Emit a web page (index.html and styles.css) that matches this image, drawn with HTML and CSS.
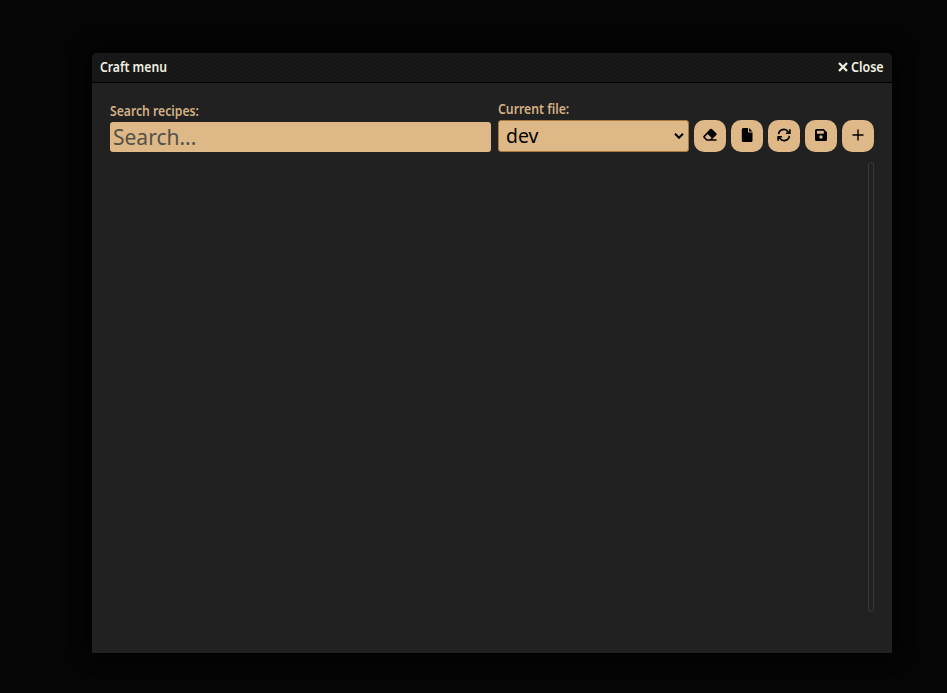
FILE: index.html
```html
<!DOCTYPE html>
<html lang="en">
<head>
<meta charset="utf-8">
<title>Craft menu</title>
<link rel="stylesheet" href="styles.css">
</head>
<body>
<section class="window">
  <header class="titlebar">
    <h1 class="title">Craft menu</h1>
    <a class="close"><svg width="10" height="10" viewBox="0 0 10 10"><path d="M1 1l8 8M9 1l-8 8" stroke="currentColor" stroke-width="2.3"/></svg><span class="close-text">Close</span></a>
  </header>
  <main class="content">
    <div class="toolbar">
      <div class="field search">
        <label class="label search-label" for="search">Search recipes:</label>
        <div class="search-box" id="search"><span class="placeholder">Search...</span></div>
      </div>
      <div class="field file">
        <label class="label file-label">Current file:</label>
        <div class="select"><span class="value">dev</span><svg width="10" height="6" viewBox="0 0 10 6"><path d="M1 .8l4 4 4-4" fill="none" stroke="#000" stroke-width="2"/></svg></div>
      </div>
      <div class="actions">
        <button class="action" aria-label="Clear"><svg width="16" height="14" viewBox="0 0 16 14"><path fill-rule="evenodd" d="M8.1 1.1Q9 .2 9.900 1.100L14.300 5.300Q15.200 6.200 14.300 7.100L10.200 11.300H14.600V12.800H4.600L1.500 9.800Q.6 8.900 1.500 8ZM5.500 5.900L2.900 8.900L5.300 11.300H8.100L9.600 9.800Z"/></svg></button>
        <button class="action" aria-label="New file"><svg width="12" height="14" viewBox="0 0 12 14"><path d="M2.300 0H7V3.500Q7 4.500 8 4.500H11.500V12.500Q11.500 14 10 14H2.300Q.8 14 .8 12.500V1.500Q.8 0 2.300 0ZM8 0L11.500 3.500H8Z"/></svg></button>
        <button class="action" aria-label="Refresh"><svg width="14" height="14" viewBox="0 0 14 14"><path d="M1.600 6.200A5.300 5.300 0 0 1 11.200 3.700L12.500 5M12.900 1.200V5.200H8.900M12.400 7.800A5.300 5.300 0 0 1 2.800 10.300L1.500 9M1.100 12.800V8.800H5.100" fill="none" stroke="#000" stroke-width="1.600"/></svg></button>
        <button class="action" aria-label="Save"><svg width="12" height="12" viewBox="0 0 12 12"><path fill-rule="evenodd" d="M1.500 0H8.700L12 3.300V10.500Q12 12 10.500 12H1.500Q0 12 0 10.500V1.500Q0 0 1.500 0ZM2 1.700V4.800H8.800V1.700ZM6 6.300A1.700 1.700 0 1 0 6 9.700A1.700 1.700 0 1 0 6 6.300Z"/></svg></button>
        <button class="action" aria-label="Add"><svg width="12" height="12" viewBox="0 0 12 12"><path d="M6 .5V11.500M.5 6H11.500" stroke="#000" stroke-width="1.400"/></svg></button>
      </div>
    </div>
    <div class="recipes"><div class="scrollbar"></div></div>
  </main>
</section>
</body>
</html>
```
FILE: styles.css
```css
* { box-sizing: border-box; }
body {
  margin: 0;
  height: 693px;
  padding: 53px 0 0 92px;
  overflow: hidden;
  background: #050505;
  font-family: "Noto Sans", sans-serif;
}
.window {
  width: 800px;
  height: 600px;
  display: flex;
  flex-direction: column;
  background: #212121;
  border-radius: 5px 5px 0 0;
  box-shadow: 0 0 20px #000;
}
.titlebar {
  height: 30px;
  padding: 0 8px 2px;
  display: flex;
  align-items: center;
  justify-content: space-between;
  color: #f0f0e0;
  border-bottom: 1px solid #000;
  border-radius: 5px 5px 0 0;
  background: repeating-conic-gradient(#1a1a1a 0 25%, #151515 0 50%) 0 0 / 4px 4px;
}
.title, .close {
  margin: 0;
  font-size: 14px;
  line-height: 27px;
  font-weight: 600;
}
.title { transform: scaleX(.87); transform-origin: left; }
.close { display: flex; align-items: center; gap: 3px; width: 46px; white-space: nowrap; }
.close svg { flex: none; }
.close-text { transform: scaleX(.89); transform-origin: left; }
.content { flex: 1; padding: 18px; }
.toolbar { display: flex; align-items: flex-end; height: 51px; }
.field { display: flex; flex-direction: column; }
.search { width: 381px; margin-right: 7px; }
.file { width: 191px; margin-right: 5px; }
.label {
  align-self: flex-start;
  padding-bottom: 1px;
  font-size: 14px;
  line-height: 20px;
  font-weight: 600;
  color: #d3b083;
  white-space: nowrap;
  transform-origin: left;
}
.search-label { transform: scaleX(.87); }
.file-label { transform: scaleX(.875); }
.search-box {
  height: 30px;
  padding-left: 3px;
  border-radius: 3px;
  background: #deb887;
  font-size: 21px;
  line-height: 30px;
  color: #545049;
}
.placeholder, .value { display: inline-block; transform-origin: left; }
.value { transform: scaleX(.97); }
.select {
  height: 32px;
  padding: 0 4px 0 7px;
  display: flex;
  align-items: center;
  justify-content: space-between;
  border: 1px solid #a8783c;
  border-radius: 3px;
  background: #deb887;
  color: #000;
  font-size: 20px;
  line-height: 28px;
}
.actions { display: flex; gap: 5px; }
.action {
  width: 32px;
  height: 32px;
  padding: 0 0 2px;
  display: flex;
  align-items: center;
  justify-content: center;
  border: 0;
  border-radius: 10px;
  background: #deb887;
}
.recipes { display: flex; justify-content: flex-end; margin-top: 10px; }
.scrollbar {
  width: 6px;
  height: 450px;
  border: 1px solid #383836;
  border-radius: 3px;
}
```
